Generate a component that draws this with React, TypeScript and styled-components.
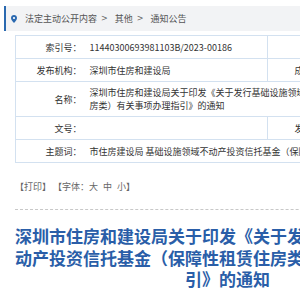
import styled, { createGlobalStyle } from "styled-components";

const GlobalStyle = createGlobalStyle`
    html, body {
        margin: 0;
        padding: 0;
        overflow: hidden;
        background: #fff;
    }
    body {
        font-family: "Noto Sans CJK SC", "Noto Sans", sans-serif;
    }
`

const Page = styled.div`
    width: 470px;
    padding: 6px 0 0 4px;
`

const Breadcrumb = styled.div`
    height: 25px;
    display: flex;
    align-items: center;
    padding-left: 5px;
    gap: 8px;
    background: #f2f3f5;
    border-left: 2px solid #2a69b0;
    font-size: 9px;
    color: #555;
`

const Crumbs = styled.div`
    display: flex;
    align-items: center;
`

const Sep = styled.span`
    margin: 0 7px 0 4px;
    color: #666;
    font-family: "DejaVu Sans", sans-serif;
    font-size: 8px;
`

const Content = styled.div`
    padding: 4px 0 0 11px;
`

const InfoTable = styled.table`
    width: 455px;
    table-layout: fixed;
    border-collapse: collapse;
    border: 1px solid #d3e1f0;
    font-size: 9px;
    color: #333;
`

const Row = styled.tr`
    border-bottom: 1px solid #d3e1f0;
`

const Label = styled.td<{ $divider?: boolean }>`
    height: 22px;
    padding: 0 4px 0 0;
    text-align: right;
    white-space: nowrap;
    line-height: 13px;
    border-left: ${(p) => (p.$divider ? "1px solid #d3e1f0" : "none")};
`

const Value = styled.td<{ $tall?: boolean }>`
    height: ${(p) => (p.$tall ? "33px" : "22px")};
    padding: ${(p) => (p.$tall ? "4px 16px 4px 4px" : "0 0 0 4px")};
    line-height: 13px;
    white-space: ${(p) => (p.$tall ? "normal" : "nowrap")};
    overflow: hidden;
    box-sizing: border-box;
`

const Tools = styled.div`
    margin-top: 17px;
    font-size: 9px;
    line-height: 13px;
    color: #666;
    display: flex;
    gap: 2px;
`

const Sizes = styled.span`
    word-spacing: 3px;
`

const Divider = styled.div`
    margin-top: 16px;
    border-top: 1px dashed #c8c8c8;
`

const Title = styled.h1`
    width: 425px;
    margin: 15px 0 0;
    font-size: 17px;
    line-height: 21.5px;
    font-weight: 700;
    text-align: center;
    color: #2a5ea8;
`

const Pin = () => (
  <svg width="6" height="8" viewBox="0 0 6 8">
    <path d="M3 0C1.3 0 0 1.3 0 3c0 2.1 3 5 3 5s3-2.9 3-5C6 1.3 4.7 0 3 0z" fill="#2a69b0" />
    <circle cx="3" cy="3" r="1.1" fill="#fff" />
  </svg>
)

const info = {
  index: "11440300693981103B/2023-00186",
  org: "深圳市住房和建设局",
  name: "深圳市住房和建设局关于印发《关于发行基础设施领域不动产投资信托基金（保障性租赁住房类）有关事项办理指引》的通知",
  keywords: "市住房建设局 基础设施领域不动产投资信托基金（保障性租赁住房）",
}

export default function App() {
  return (
    <Page>
      <GlobalStyle />
      <Breadcrumb>
        <Pin />
        <Crumbs>
          法定主动公开内容<Sep>&gt;</Sep>其他<Sep>&gt;</Sep>通知公告
        </Crumbs>
      </Breadcrumb>
      <Content>
        <InfoTable>
          <colgroup>
            <col style={{ width: 70 }} />
            <col style={{ width: 182 }} />
            <col style={{ width: 76 }} />
            <col style={{ width: 127 }} />
          </colgroup>
          <tbody>
            <Row>
              <Label>索引号：</Label>
              <Value>{info.index}</Value>
              <Label $divider>分类：</Label>
              <Value>通知公告</Value>
            </Row>
            <Row>
              <Label>发布机构：</Label>
              <Value>{info.org}</Value>
              <Label $divider>成文日期：</Label>
              <Value>2023-06-20</Value>
            </Row>
            <Row>
              <Label>名称：</Label>
              <Value $tall colSpan={3}>{info.name}</Value>
            </Row>
            <Row>
              <Label>文号：</Label>
              <Value></Value>
              <Label $divider>发布日期：</Label>
              <Value>2023-06-20</Value>
            </Row>
            <Row>
              <Label>主题词：</Label>
              <Value colSpan={3}>{info.keywords}</Value>
            </Row>
          </tbody>
        </InfoTable>
        <Tools>
          <span>【打印】</span>
          <Sizes>【字体：大 中 小】</Sizes>
        </Tools>
        <Divider />
        <Title>{info.name}</Title>
      </Content>
    </Page>
  )
}
